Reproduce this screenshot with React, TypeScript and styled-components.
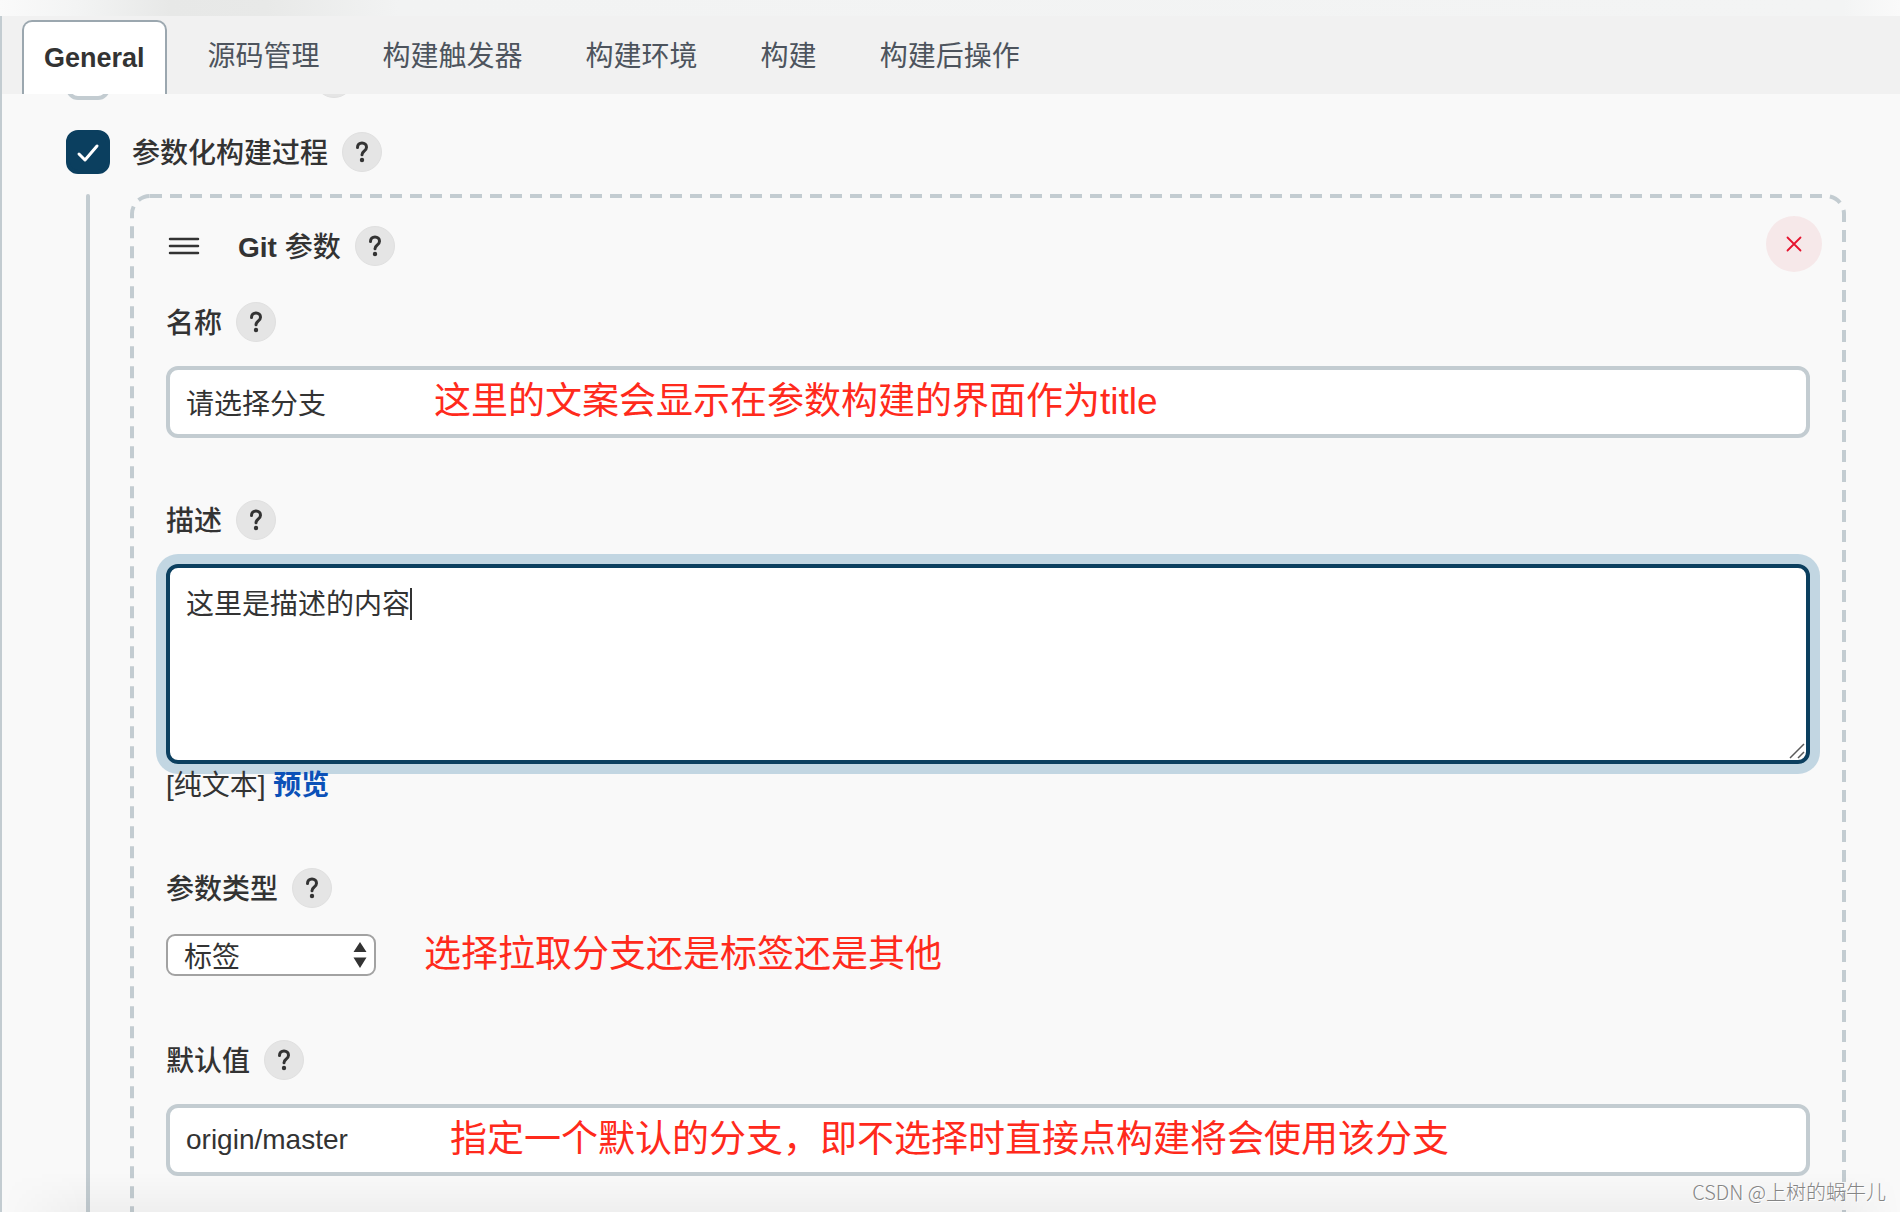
import React, { useId } from "react";
import styled, { createGlobalStyle } from "styled-components";

const sans = `"Liberation Sans", "Noto Sans CJK SC", sans-serif`;
const ink = "#333333";
const line = "#c3ccd1";
const navy = "#0b3f5f";

const GlobalStyle = createGlobalStyle`
  *, *::before, *::after { box-sizing: border-box; }
  body {
    margin: 0;
    background: #f9f9f9;
    color: ${ink};
    font: 28px/40px ${sans};
  }
  button, input, textarea, select { font: inherit; color: inherit; }
`;

const Page = styled.div`
  position: relative;
  display: flex;
  flex-direction: column;
  height: 100vh;
  overflow: hidden;
`;

const TopShade = styled.div`
  flex: 0 0 16px;
  background: linear-gradient(
    90deg,
    #fafafa 0%,
    #f3f4f4 4%,
    #e7e8e7 9%,
    #e8e9e8 14%,
    #f2f3f3 21%,
    #f3f4f4 97%,
    #fafafa 100%
  );
`;

const Main = styled.main`
  flex: 1;
  min-height: 0;
  display: flex;
  flex-direction: column;
  border-left: 2px solid ${line};
`;

const TabBar = styled.nav`
  flex: 0 0 78px;
  display: flex;
  gap: 19px;
  padding: 4px 20px 0;
  background: #f1f1f1;
`;

const Tab = styled.button<{ $active?: boolean }>`
  padding: 0 ${(p) => (p.$active ? 20 : 22)}px;
  border: ${(p) => (p.$active ? "2px solid #9ba7af" : "0")};
  border-bottom: 0;
  border-radius: 10px 10px 0 0;
  background: ${(p) => (p.$active ? "#ffffff" : "transparent")};
  color: ${(p) => (p.$active ? ink : "#4d545d")};
  font-size: ${(p) => (p.$active ? 27 : 28)}px;
  font-weight: ${(p) => (p.$active ? 700 : 400)};
  line-height: 72px;
  white-space: nowrap;
`;

const Form = styled.form`
  flex: 1;
  min-height: 0;
  overflow: hidden;
  padding: 0 54px 0 64px;
`;

const ScrolledRow = styled.div`
  display: flex;
  align-items: flex-end;
  gap: 204px;
  height: 6px;
  overflow: hidden;
`;

const OptionRow = styled.div`
  display: flex;
  align-items: center;
  gap: 22px;
  margin: 30px 0 20px;
`;

const CheckWrap = styled.span`
  position: relative;
  flex: none;
  display: flex;
  svg {
    position: absolute;
    inset: 0;
    pointer-events: none;
  }
`;

const Checkbox = styled.input`
  appearance: none;
  width: 44px;
  height: 44px;
  margin: 0;
  border: 4px solid ${line};
  border-radius: 12px;
  background: #ffffff;
  &:checked {
    border-color: ${navy};
    background: ${navy};
  }
`;

const LabelRow = styled.div`
  display: flex;
  align-items: center;
  gap: 14px;
  height: 40px;
`;

const Label = styled.label`
  padding-top: 3px;
  font-weight: 500;
  white-space: nowrap;
`;

const HelpButton = styled.button`
  flex: none;
  display: flex;
  align-items: center;
  justify-content: center;
  width: 40px;
  height: 40px;
  padding: 0;
  border: 1px solid #e0e0e0;
  border-radius: 50%;
  background: #e5e5e5;
`;

const PeekHelp = styled(HelpButton)`
  margin-bottom: 2px;
`;

const Nested = styled.div`
  display: flex;
  gap: 40px;
  padding-left: 20px;
`;

const Rail = styled.div`
  flex: 0 0 4px;
  border-radius: 2px 2px 0 0;
  background: ${line};
`;

const Card = styled.section`
  position: relative;
  flex: 1;
  min-width: 0;
  padding: 22px 36px 80px;
`;

const DashedOutline = styled.svg`
  position: absolute;
  inset: 0;
  width: 100%;
  height: 100%;
  pointer-events: none;
  rect {
    width: calc(100% - 4px);
    height: calc(100% - 4px);
  }
`;

const CardHeader = styled.header`
  display: flex;
  justify-content: space-between;
  margin: 0 -12px 30px 0;
`;

const TitleGroup = styled.div`
  display: flex;
  align-items: center;
  gap: 14px;
  height: 40px;
  margin-top: 10px;
`;

const DragHandle = styled.button`
  display: flex;
  width: 58px;
  padding: 0;
  border: 0;
  background: none;
`;

const CardTitle = styled.h2`
  margin: 0;
  padding-top: 4px;
  font-size: 28px;
  font-weight: 700;
  line-height: 40px;
`;

const TitleCjk = styled.span`
  font-weight: 500;
`;

const DeleteButton = styled.button`
  display: flex;
  align-items: center;
  justify-content: center;
  width: 56px;
  height: 56px;
  padding: 0;
  border: 0;
  border-radius: 50%;
  background: #f6e8e9;
`;

const Field = styled.div`
  margin-bottom: 62px;
`;

const Control = styled.div`
  position: relative;
  margin-top: 24px;
`;

const TextInput = styled.input`
  display: block;
  width: 100%;
  height: 72px;
  padding: 0 16px;
  border: 4px solid ${line};
  border-radius: 12px;
  background: #ffffff;
  outline: 0;
`;

const TextArea = styled.textarea`
  display: block;
  width: 100%;
  height: 200px;
  padding: 17px 16px;
  border: 4px solid ${navy};
  border-radius: 12px;
  background: #ffffff;
  box-shadow: 0 0 0 10px #c2d6e2;
  outline: 0;
  resize: none;
`;

const Caret = styled.span`
  position: absolute;
  top: 24px;
  left: 244px;
  width: 2px;
  height: 32px;
  background: ${ink};
`;

const Grip = styled.svg`
  position: absolute;
  right: 5px;
  bottom: 5px;
`;

const PreviewLine = styled.div`
  position: relative;
  padding-top: 2px;
  a {
    color: #0b51b8;
    font-weight: 700;
    text-decoration: none;
  }
`;

const SelectRow = styled.div`
  display: flex;
  align-items: center;
  gap: 48px;
  margin-top: 24px;
  padding: 2px 0;
`;

const SelectWrap = styled.span`
  position: relative;
  display: flex;
  svg {
    position: absolute;
    top: 8px;
    right: 9px;
    pointer-events: none;
  }
`;

const Select = styled.select`
  appearance: none;
  width: 210px;
  height: 42px;
  padding: 5px 40px 0 16px;
  border: 2px solid #a2a2a2;
  border-radius: 9px;
  background: #ffffff;
  line-height: 32px;
`;

const Note = styled.span`
  color: #ff2a1c;
  font-size: 37px;
  line-height: 42px;
  white-space: nowrap;
`;

const NoteOver = styled(Note)<{ $left: number }>`
  position: absolute;
  top: 15px;
  left: ${(p) => p.$left}px;
  pointer-events: none;
`;

const BottomShade = styled.div`
  position: absolute;
  left: 2px;
  right: 0;
  bottom: 0;
  height: 40px;
  background: linear-gradient(180deg, rgba(0, 0, 0, 0), rgba(0, 0, 0, 0.04));
  mask-image: linear-gradient(90deg, transparent, #000 80px, #000 calc(100% - 60px), transparent);
  pointer-events: none;
`;

const Watermark = styled.span`
  position: absolute;
  right: 14px;
  bottom: 5px;
  color: #858585;
  font: 300 20px/30px "Noto Sans CJK SC", sans-serif;
  text-shadow: 1px 1px 0 #ffffff;
  white-space: nowrap;
`;

function Help({ topic }: { topic: string }) {
  return (
    <HelpButton type="button" aria-label={topic}>
      <svg width="14" height="22" viewBox="0 0 14 22" fill="none" aria-hidden="true">
        <path
          d="M2.500 6.500C2.500 3.700 4.400 2 7 2s4.500 1.600 4.500 4.200c0 2-1 2.900-2.500 4C7.600 11.300 7 12.200 7 13.800"
          stroke={ink}
          strokeWidth="3"
          strokeLinecap="round"
        />
        <circle cx="7" cy="19" r="2.200" fill={ink} />
      </svg>
    </HelpButton>
  );
}

function FieldLabel({ id, text }: { id: string; text: string }) {
  return (
    <LabelRow>
      <Label htmlFor={id}>{text}</Label>
      <Help topic={text} />
    </LabelRow>
  );
}

interface TextFieldProps {
  label: string;
  value: string;
  note: string;
  noteLeft: number;
}

function TextField({ label, value, note, noteLeft }: TextFieldProps) {
  const id = useId();
  return (
    <Field>
      <FieldLabel id={id} text={label} />
      <Control>
        <TextInput id={id} type="text" defaultValue={value} />
        <NoteOver $left={noteLeft}>{note}</NoteOver>
      </Control>
    </Field>
  );
}

const tabs = ["General", "源码管理", "构建触发器", "构建环境", "构建", "构建后操作"];

export default function App() {
  return (
    <Page>
      <GlobalStyle />
      <TopShade />
      <Main>
        <TabBar>
          {tabs.map((name, i) => (
            <Tab key={name} type="button" $active={i === 0}>
              {name}
            </Tab>
          ))}
        </TabBar>
        <Form>
          {/* The previous option, scrolled almost out of view under the tab bar. */}
          <ScrolledRow>
            <Checkbox type="checkbox" aria-label="option" />
            <PeekHelp type="button" aria-label="help" />
          </ScrolledRow>
          <OptionRow>
            <CheckWrap>
              <Checkbox id="parameterized" type="checkbox" defaultChecked />
              <svg width="44" height="44" viewBox="0 0 44 44" fill="none" aria-hidden="true">
                <path d="M13 24l6 6 12-14" stroke="#fff" strokeWidth="3" strokeLinecap="round" strokeLinejoin="round" />
              </svg>
            </CheckWrap>
            <FieldLabel id="parameterized" text="参数化构建过程" />
          </OptionRow>
          <Nested>
            <Rail />
            <Card>
              <DashedOutline aria-hidden="true">
                <rect x="2" y="2" rx="18" fill="none" stroke={line} strokeWidth="4" strokeDasharray="12 8" />
              </DashedOutline>
              <CardHeader>
                <TitleGroup>
                  <DragHandle type="button" aria-label="drag">
                    <svg width="36" height="20" viewBox="0 0 36 20" fill="none" aria-hidden="true">
                      <path d="M4 3h28M4 10h28M4 17h28" stroke={ink} strokeWidth="2.500" strokeLinecap="round" />
                    </svg>
                  </DragHandle>
                  <CardTitle>
                    Git <TitleCjk>参数</TitleCjk>
                  </CardTitle>
                  <Help topic="Git 参数" />
                </TitleGroup>
                <DeleteButton type="button" aria-label="delete">
                  <svg width="16" height="16" viewBox="0 0 16 16" fill="none" aria-hidden="true">
                    <path d="M1.500 1.500l13 13M14.500 1.500l-13 13" stroke="#e6142f" strokeWidth="1.800" strokeLinecap="round" />
                  </svg>
                </DeleteButton>
              </CardHeader>
              <TextField
                label="名称"
                value="请选择分支"
                note="这里的文案会显示在参数构建的界面作为title"
                noteLeft={268}
              />
              <Field>
                <FieldLabel id="description" text="描述" />
                <Control>
                  <TextArea id="description" defaultValue="这里是描述的内容" />
                  <Caret />
                  <Grip width="16" height="16" viewBox="0 0 16 16" aria-hidden="true">
                    <path d="M1 15L15 1M9 15l6-6" stroke="#5a5a5a" strokeWidth="1.500" />
                  </Grip>
                </Control>
                <PreviewLine>
                  [纯文本] <a href="#preview">预览</a>
                </PreviewLine>
              </Field>
              <Field>
                <FieldLabel id="kind" text="参数类型" />
                <SelectRow>
                  <SelectWrap>
                    <Select id="kind" defaultValue="标签">
                      <option>标签</option>
                    </Select>
                    <svg width="14" height="26" viewBox="0 0 14 26" fill={ink} aria-hidden="true">
                      <path d="M7 0l6.500 10H.5zM7 26L.5 15.500h13z" />
                    </svg>
                  </SelectWrap>
                  <Note>选择拉取分支还是标签还是其他</Note>
                </SelectRow>
              </Field>
              <TextField
                label="默认值"
                value="origin/master"
                note="指定一个默认的分支，即不选择时直接点构建将会使用该分支"
                noteLeft={284}
              />
            </Card>
          </Nested>
        </Form>
      </Main>
      <BottomShade />
      <Watermark>CSDN @上树的蜗牛儿</Watermark>
    </Page>
  );
}
